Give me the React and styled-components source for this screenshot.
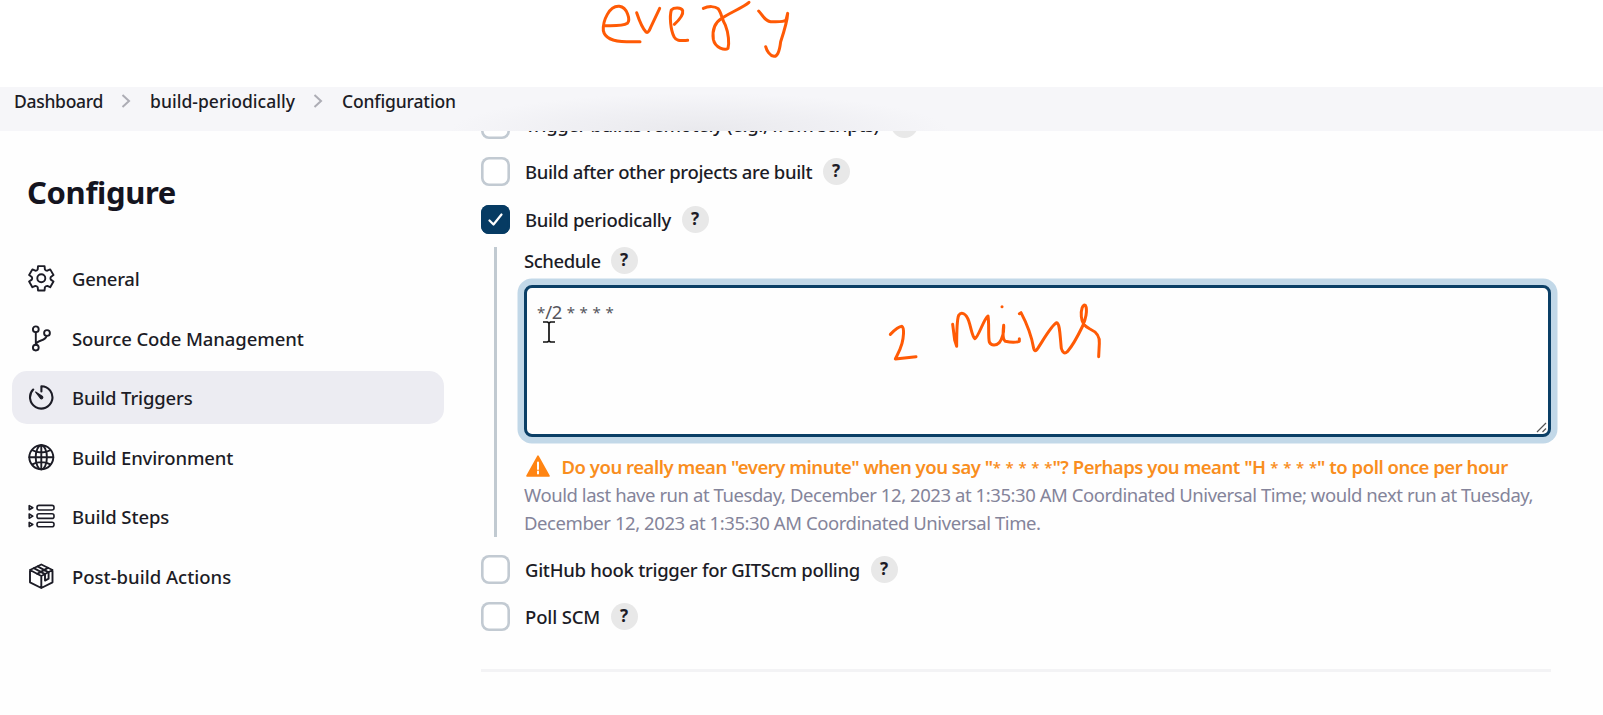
import React from "react";
import styled, { createGlobalStyle } from "styled-components";

const Global = createGlobalStyle`
  * { box-sizing: border-box; }
  html, body { margin: 0; background: #fff; }
  body {
    font-family: "Noto Sans", "Open Sans", sans-serif;
    font-size: 18.5px;
    font-weight: 500;
    color: #1c1c26;
    overflow: hidden;
  }
`;

const Page = styled.div`
  position: relative;
  width: 1603px;
  height: 715px;
  overflow: hidden;
  display: flex;
  flex-direction: column;
`;

const Whiteboard = styled.div`
  height: 87px;
  flex: none;
  background: #fff;
`;

const Breadcrumbs = styled.nav`
  height: 44px;
  flex: none;
  display: flex;
  align-items: flex-start;
  padding: 0 0 0 14px;
  background:
    radial-gradient(ellipse 250px 38px at 700px 44px, #e9e9ed 0%, rgba(238, 238, 242, 0.8) 55%, rgba(246, 246, 249, 0) 100%),
    #f6f6f9;
`;

const Crumb = styled.span`
  font-size: 17.5px;
  line-height: 28px;
  letter-spacing: ${(p) => p.$track || 0}px;
  width: ${(p) => p.$width}px;
  white-space: nowrap;
`;

const CrumbArrow = styled.svg`
  flex: none;
  width: 10px;
  height: 14px;
  margin: 7px 19px 0 18px;
  fill: none;
  stroke: #adadb5;
  stroke-width: 2;
`;

const Body = styled.div`
  flex: 1;
  min-height: 0;
  display: flex;
  overflow: hidden;
  background: #fefefe;
`;

const Sidebar = styled.aside`
  width: 481px;
  flex: none;
  padding: 38px 37px 0 12px;
`;

const Title = styled.h1`
  margin: 0 0 37px 15px;
  font-size: 31px;
  line-height: 46px;
  font-weight: 700;
  letter-spacing: ${(p) => p.$track}px;
  color: #14141f;
`;

const Tasks = styled.div`
  display: flex;
  flex-direction: column;
  gap: 6.6px;
`;

const Task = styled.a`
  height: 53px;
  display: flex;
  align-items: center;
  gap: 17px;
  padding: 0 16px;
  border-radius: 15px;
  background: ${(p) => (p.$active ? "#ececf2" : "transparent")};
  letter-spacing: ${(p) => p.$track || 0}px;
  white-space: nowrap;
`;

const TaskIcon = styled.svg`
  flex: none;
  width: 27px;
  height: 27px;
  fill: none;
  stroke: #1c1c26;
  stroke-width: 1.9;
  stroke-linejoin: round;
  stroke-linecap: round;
`;

const Form = styled.main`
  width: 1070px;
  flex: none;
  margin-top: -21px;
  display: flex;
  flex-direction: column;
`;

const Option = styled.label`
  height: 29px;
  display: flex;
  align-items: center;
  margin-bottom: ${(p) => p.$gap}px;
`;

const Box = styled.span`
  flex: none;
  width: 29px;
  height: 29px;
  margin-right: 15px;
  border-radius: 8px;
  box-shadow: inset 0 0 0 2.6px ${(p) => (p.$checked ? "#063b63" : "#c2cad2")};
  background: ${(p) => (p.$checked ? "#063b63" : "#fff")};
  display: flex;
  align-items: center;
  justify-content: center;
`;

const Tick = styled.svg`
  width: 15px;
  height: 13px;
  fill: none;
  stroke: #fff;
  stroke-width: 2.2;
  stroke-linecap: round;
  stroke-linejoin: round;
`;

const OptionText = styled.span`
  line-height: 28px;
  letter-spacing: ${(p) => p.$track || 0}px;
  white-space: nowrap;
  width: ${(p) => p.$width}px;
`;

const Help = styled.span`
  flex: none;
  width: 27px;
  height: 27px;
  border-radius: 50%;
  background: #e8e8e8;
  font-size: 17px;
  font-weight: 700;
  line-height: 26px;
  padding-right: 1px;
  text-align: center;
`;

const Nested = styled.section`
  margin: 13px 0 18px 13px;
  height: 290px;
  padding-left: 27px;
  border-left: 3px solid #c1cad1;
`;

const FieldHead = styled.div`
  height: 27px;
  display: flex;
  align-items: center;
`;

const Area = styled.div`
  position: relative;
  width: 1027px;
  height: 152px;
  margin: 11px 0 15px;
  padding: 10px;
  border: 3px solid #0b3f66;
  border-radius: 8px;
  box-shadow: 0 0 0 6.5px #c2d8e8;
  background: #fefefe;
  color: #55555c;
  font-weight: 400;
  line-height: 28px;
  letter-spacing: -0.4px;
`;

const Grip = styled.svg`
  position: absolute;
  right: 1px;
  bottom: 1px;
  width: 12px;
  height: 12px;
  stroke: #555;
  stroke-width: 1.2;
`;

const Pointer = styled.svg`
  position: absolute;
  left: 15px;
  top: 33px;
  width: 14px;
  height: 22px;
  fill: none;
  stroke: #111;
  stroke-width: 1.7;
`;

const Warning = styled.div`
  height: 28px;
  display: flex;
  align-items: center;
  padding-left: 2px;
  gap: 11.5px;
  color: #f98e1e;
  font-weight: 600;
  letter-spacing: -0.48px;
  white-space: nowrap;
`;

const Stars = styled.span`
  font-size: 15px;
  line-height: 1;
  letter-spacing: 0;
  word-spacing: 0.8px;
  vertical-align: 1px;
`;

const WarningIcon = styled.svg`
  flex: none;
  width: 24px;
  height: 22px;
`;

const Hint = styled.div`
  margin-top: 1px;
  color: #84849a;
  font-weight: 400;
  line-height: 27.5px;
  letter-spacing: -0.435px;
  white-space: nowrap;
`;

const Divider = styled.hr`
  width: 100%;
  height: 3px;
  margin: 38px 0 0;
  border: 0;
  background: #f3f3f5;
`;

const Ink = styled.svg`
  position: absolute;
  left: ${(p) => p.$x}px;
  top: ${(p) => p.$y}px;
  fill: none;
  stroke: #ff5a05;
  stroke-width: 9;
  stroke-linecap: round;
  stroke-linejoin: round;
  pointer-events: none;
`;

const polar = (r, deg) => {
  const a = (deg * Math.PI) / 180;
  return `${(13.3 + r * Math.cos(a)).toFixed(2)} ${(13.3 + r * Math.sin(a)).toFixed(2)}`;
};
const gearPath =
  "M" +
  [0, 1, 2, 3, 4, 5]
    .map((i) => {
      const c = -90 + i * 60;
      return `${polar(9.6, c - 22)} L${polar(12.6, c - 15)} L${polar(12.6, c + 15)} L${polar(9.6, c + 22)} Q${polar(8.8, c + 30)} ${polar(9.6, c + 38)}`;
    })
    .join(" L") +
  "Z";

const icons = {
  gear: (
    <>
      <path d={gearPath} />
      <circle cx="13.3" cy="13.3" r="4" />
    </>
  ),
  branch: (
    <>
      <circle cx="7.8" cy="4.3" r="2.9" />
      <circle cx="7.8" cy="22.6" r="2.9" />
      <circle cx="19" cy="8" r="2.9" />
      <path d="M7.8 7.4V19.5M18.6 11C17.6 16.5 9 14.5 7.9 19.3" />
    </>
  ),
  timer: (
    <>
      <path d="M13.4 7.5V2.2A11.2 11.2 0 1 1 5.2 5.6" strokeWidth="2.1" />
      <path d="M7.6 8l6.9 4.5a1.4 1.4 0 0 1-1.9 2z" fill="#1c1c26" strokeWidth="1.2" />
    </>
  ),
  globe: (
    <>
      <circle cx="13.3" cy="13.3" r="12" />
      <ellipse cx="13.3" cy="13.3" rx="5.6" ry="12" />
      <path d="M13.3 1.3v24M1.3 13.3h24M4.4 6.2c5 3 12.8 3 17.8 0M4.4 20.4c5-3 12.8-3 17.8 0" />
    </>
  ),
  steps: (
    <g strokeWidth="1.6">
      <rect x="9" y="2.4" width="17" height="4.6" rx="2" />
      <rect x="9" y="10.8" width="17" height="4.6" rx="2" />
      <rect x="9" y="19.2" width="17" height="4.6" rx="2" />
      <path d="M1.2 2.6v4.2l3.6-2.1zM1.2 11v4.2l3.6-2.1zM1.2 19.4v4.2l3.6-2.1z" />
    </g>
  ),
  box: (
    <>
      <path d="M13.3 1.5L24.5 7v12.3L13.3 25 2 19.3V7zM2 7l11.3 6L24.5 7M13.3 13v12" />
      <path d="M5.8 5.2L17 11.2v6.4l3.6-1.9V9.3L9.6 3.4M9.3 10.8l10.6-6" />
    </>
  ),
};

const tasks = [
  { icon: "gear", text: "General", track: -0.28 },
  { icon: "branch", text: "Source Code Management", track: -0.09 },
  { icon: "timer", text: "Build Triggers", track: -0.15 },
  { icon: "globe", text: "Build Environment", track: -0.16 },
  { icon: "steps", text: "Build Steps", track: -0.1 },
  { icon: "box", text: "Post-build Actions", track: 0 },
];

const activeTask = "Build Triggers";

function Arrow() {
  return (
    <CrumbArrow viewBox="0 0 10 14">
      <path d="M1.5 1L8 7l-6.5 6" />
    </CrumbArrow>
  );
}

function Check({ text, width, track, checked, gap }) {
  return (
    <Option $gap={gap}>
      <Box $checked={checked}>
        {checked && (
          <Tick viewBox="0 0 15 13">
            <path d="M1.5 7.5l4 4L13.5 1.5" />
          </Tick>
        )}
      </Box>
      <OptionText $width={width} $track={track}>{text}</OptionText>
      <Help>?</Help>
    </Option>
  );
}

export default function App() {
  return (
    <Page>
      <Global />
      <Whiteboard />
      <Breadcrumbs>
        <Crumb $width={89} $track={-0.3}>Dashboard</Crumb>
        <Arrow />
        <Crumb $width={145} $track={0.04}>build-periodically</Crumb>
        <Arrow />
        <Crumb $width={115} $track={-0.14}>Configuration</Crumb>
      </Breadcrumbs>
      <Body>
        <Sidebar>
          <Title $track={-0.35}>Configure</Title>
          <Tasks>
            {tasks.map((t) => (
              <Task key={t.text} $active={t.text === activeTask} $track={t.track}>
                <TaskIcon viewBox="0 0 27 27">{icons[t.icon]}</TaskIcon>
                {t.text}
              </Task>
            ))}
          </Tasks>
        </Sidebar>
        <Form>
          <Check text="Trigger builds remotely (e.g., from scripts)" width={366} track={-0.38} gap={18} />
          <Check text="Build after other projects are built" width={298} track={-0.36} gap={19} />
          <Check text="Build periodically" width={157} track={-0.34} gap={0} checked />
          <Nested>
            <FieldHead>
              <OptionText $width={87} $track={-0.45}>Schedule</OptionText>
              <Help>?</Help>
            </FieldHead>
            <Area>
              <Stars>*</Stars>/2<Stars> * * * *</Stars>
              <Pointer viewBox="0 0 14 22">
                <path d="M1 1h4.5l1.5 1 1.5-1H13M1 21h4.5l1.5-1 1.5 1H13M7 2v18" />
              </Pointer>
              <Grip viewBox="0 0 12 12">
                <path d="M2 11L11 2M7.5 11L11 7.5" />
              </Grip>
            </Area>
            <Warning>
              <WarningIcon viewBox="0 0 24 22">
                <path d="M12 1.2L23 21H1z" fill="#ff8412" stroke="#ff8412" strokeWidth="1.6" strokeLinejoin="round" />
                <path d="M12 7.5v6.5M12 16.6v2" stroke="#fff" strokeWidth="2" strokeLinecap="round" />
              </WarningIcon>
              <span>
                Do you really mean "every minute" when you say "<Stars>* * * * *</Stars>"? Perhaps you meant "H
                <Stars> * * * *</Stars>" to poll once per hour
              </span>
            </Warning>
            <Hint>
              Would last have run at Tuesday, December 12, 2023 at 1:35:30 AM Coordinated Universal Time; would next run at Tuesday,
              <br />
              December 12, 2023 at 1:35:30 AM Coordinated Universal Time.
            </Hint>
          </Nested>
          <Check text="GitHub hook trigger for GITScm polling" width={346} track={-0.29} gap={18} />
          <Check text="Poll SCM" width={86} track={-0.15} gap={0} />
          <Divider />
        </Form>
      </Body>
      <Ink $x={580} $y={0} width="260" height="70" viewBox="0 0 780 210">
        <path d="M72 77C100 78 130 78 142 70C152 60 142 22 118 19C88 16 68 62 70 92C74 112 95 125 140 125L180 125" />
        <path d="M170 38C178 62 188 85 198 96C204 100 208 92 212 82L239 25" />
        <path d="M283 73C300 58 310 42 308 32C304 22 282 22 274 30C268 50 272 90 282 110C290 124 300 122 323 121" />
        <path d="M370 25C385 18 405 18 414 26C424 36 424 55 436 75C446 100 448 130 444 145C436 152 405 145 400 118C396 90 405 68 425 55C450 38 490 22 507 7" />
        <path d="M536 33C548 45 552 62 572 65C592 66 612 66 618 60L623 40C622 60 612 95 602 125C598 160 590 170 582 169C570 168 560 152 557 140" />
      </Ink>
      <Ink $x={860} $y={280} width="260" height="100" viewBox="0 0 780 300">
        <path d="M91 163C102 152 116 140 126 139C134 145 130 175 126 190C120 212 112 225 106 237L168 230" />
        <path d="M278 133L284 180L290 199C290 150 290 120 296 106C304 94 318 100 326 122C334 145 336 170 345 176C355 172 372 115 384 108C388 130 384 170 388 186C394 198 408 198 418 188C428 175 432 155 431 136C428 160 428 178 436 184C450 187 470 187 478 184L478 176" />
        <path d="M426 80h.1" />
        <path d="M478 101L483 98C500 130 515 170 521 205Q524 218 532 207C550 180 575 135 590 128C600 130 600 170 604 205Q610 226 622 215C640 195 655 165 668 138C676 120 684 90 676 76C668 72 662 90 664 110C666 130 672 138 690 147C710 156 720 168 718 190L716 230" />
      </Ink>
    </Page>
  );
}
